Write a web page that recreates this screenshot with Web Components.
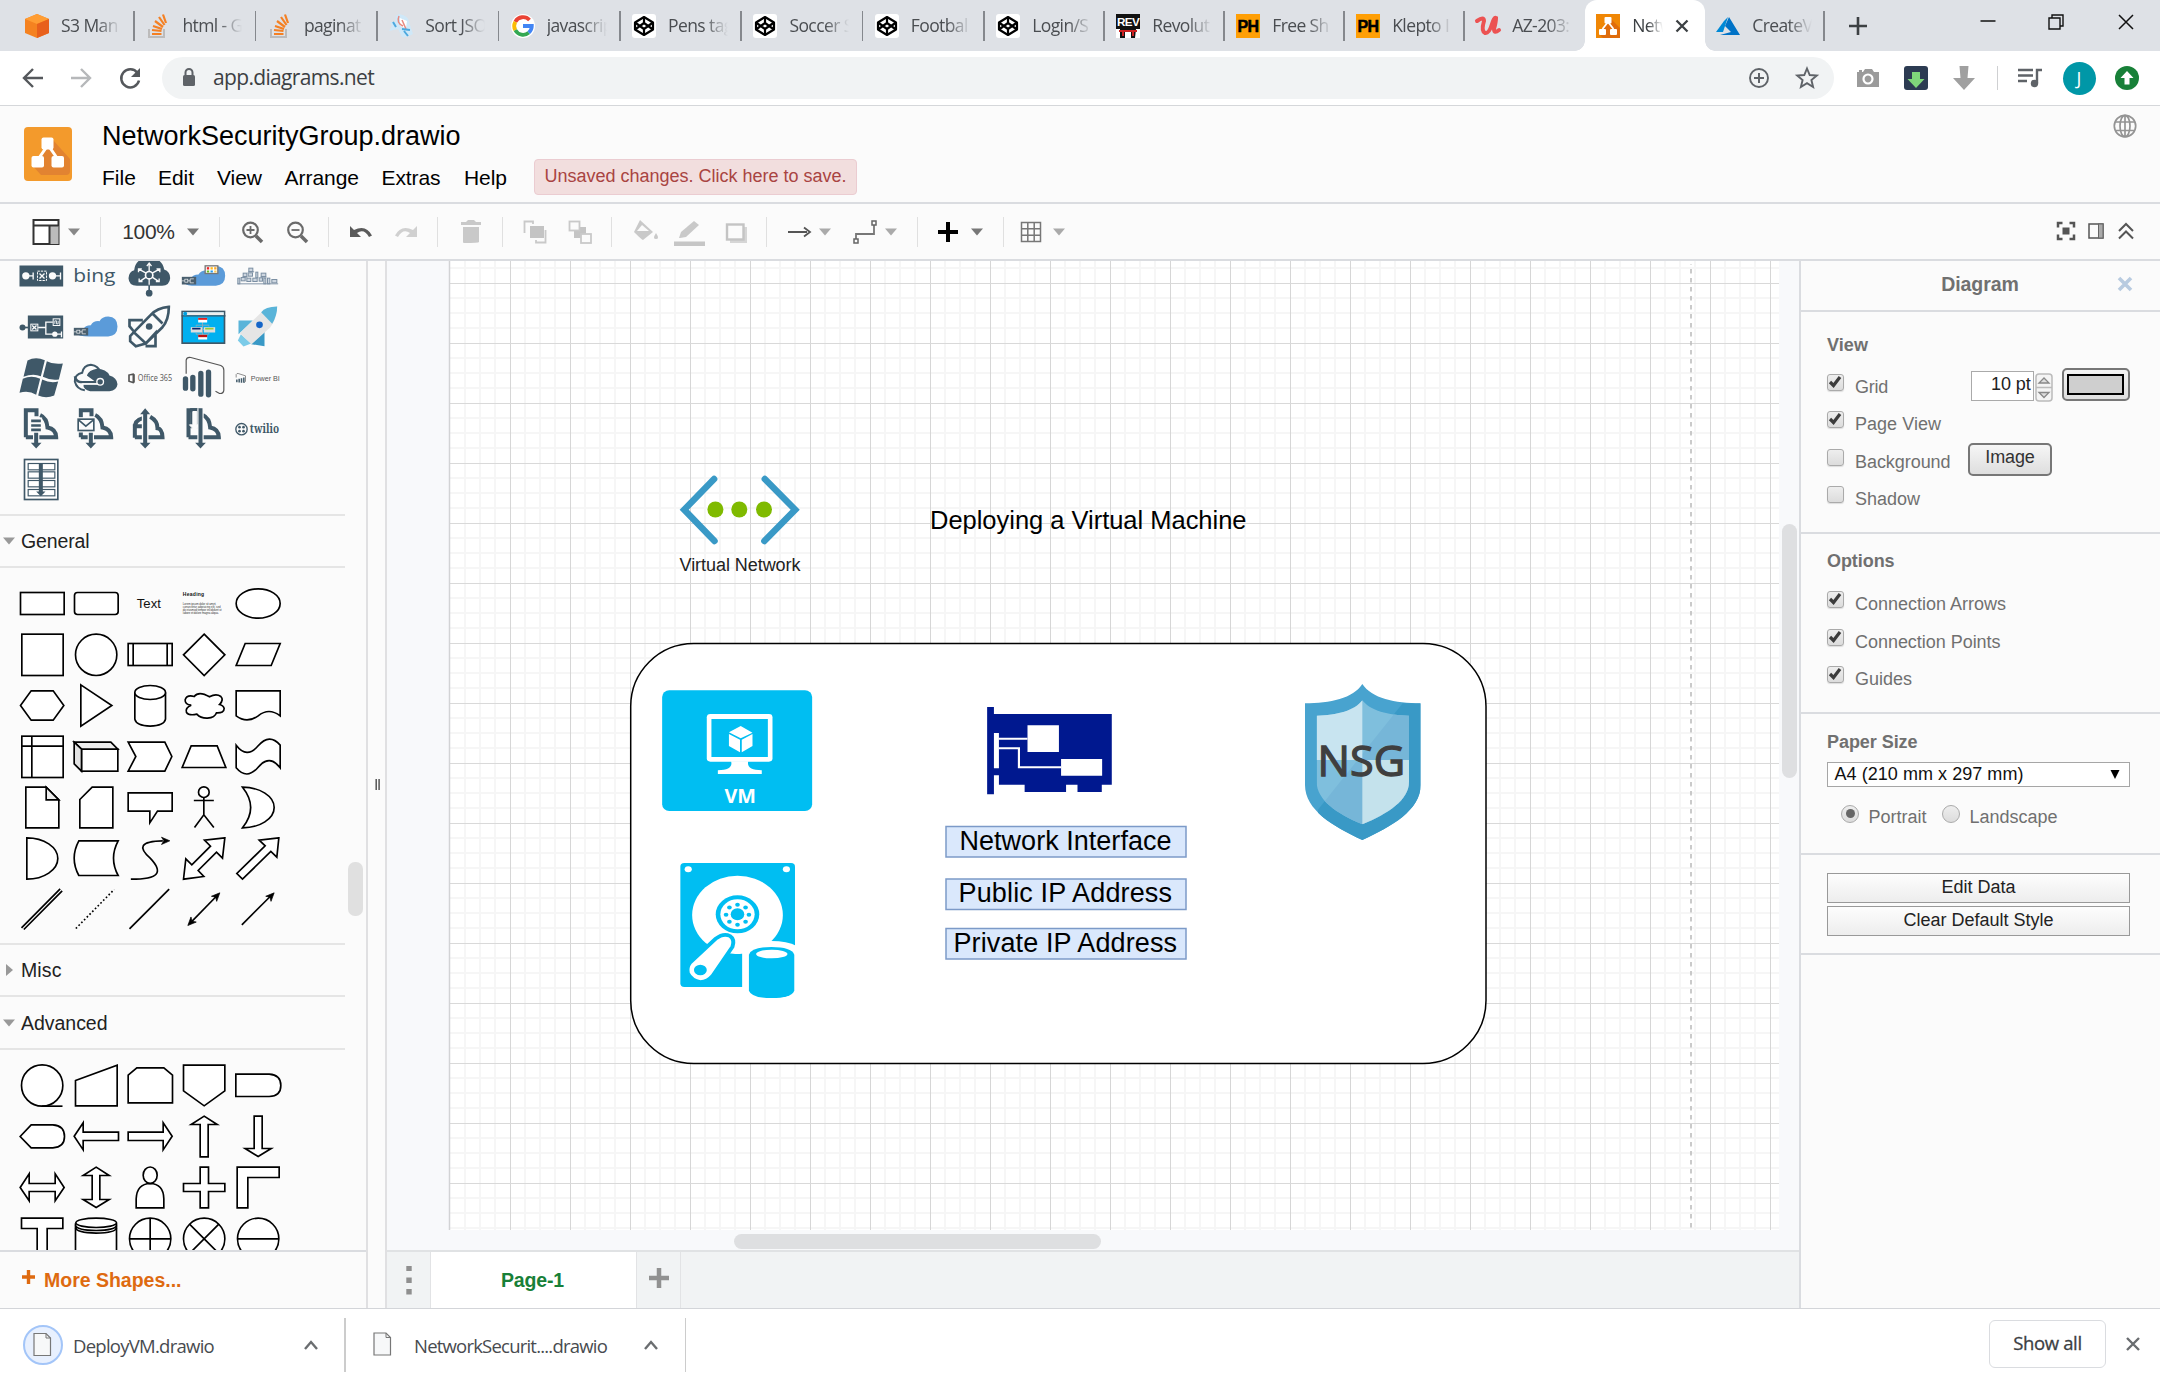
<!DOCTYPE html>
<html lang="en">
<head>
<meta charset="utf-8">
<title>NetworkSecurityGroup.drawio</title>
<style>
html,body{margin:0;padding:0;width:2160px;height:1380px;overflow:hidden;background:#fff;font-family:"Liberation Sans",Arial,sans-serif}
</style>
</head>
<body>
<app-window></app-window>
<script>
const UI = "'Open Sans','Noto Sans',sans-serif";
const svg = (w, h, body, extra = '') =>
  `<svg width="${w}" height="${h}" viewBox="${-w / 2} ${-h / 2} ${w} ${h}" ${extra}>${body}</svg>`;
/* Lays items out in a flex row; each item is [centre x, width, markup, vertical nudge]. */
function track(start, items) {
  let x = start;
  return items.map(([cx, w, html, dy = 0]) => {
    const left = cx - w / 2, gap = left - x;
    x = left + w;
    return `<span class="i" style="width:${w}px;margin-left:${gap}px;margin-top:${dy * 2}px">${html}</span>`;
  }).join('');
}
const base = `:host{display:block;box-sizing:border-box}*{box-sizing:border-box}svg{display:block;flex:none;overflow:visible}
.i{flex:none;display:flex;align-items:center;justify-content:center}`;
class Base extends HTMLElement {
  connectedCallback() {
    if (this.shadowRoot) return;
    this.attachShadow({ mode: 'open' }).innerHTML = `<style>${base}${this.css()}</style>${this.html()}`;
    this.ready();
  }
  css() { return ''; }
  html() { return '<slot></slot>'; }
  ready() {}
}
/* Text that is tracked to a given width. */
class FitText extends Base {
  css() { return ':host{display:inline-block;white-space:nowrap;line-height:1.2;padding-top:2px}:host([flat]){padding-top:0}span{display:inline-block}'; }
  html() { return '<span><slot></slot></span>'; }
  ready() {
    const s = this.shadowRoot.querySelector('span'), w = +this.getAttribute('w');
    const n = this.textContent.length, d = w - s.getBoundingClientRect().width;
    s.style.letterSpacing = (d / n) + 'px';
  }
}
customElements.define('fit-text', FitText);

/* ---------- browser tabs ---------- */
const codepen = svg(24, 24, `<rect x="-12" y="-12" width="24" height="24" rx="3" fill="#fff"/><g fill="none" stroke="#000" stroke-width="2.200" stroke-linejoin="round"><path d="M0-9L9-3.500V3.500L0 9-9 3.500V-3.500Z"/><path d="M-9-3.500L0 3 9-3.500M-9 3.500L0-3 9 3.500M0-9V-3M0 9V3"/></g>`);
const stack = svg(24, 24, `<path d="M-9 3V11H6V3" fill="none" stroke="#bcbbbb" stroke-width="2"/><g stroke="#f48024" stroke-width="2.200"><path d="M-6 8H3.500M-6 4L3.500 5M-5 0L4 3M-3-5L5 1M1-9L6.500-1M5-11.500L8-3"/></g>`);
const ph = svg(24, 24, `<rect x="-12" y="-12" width="24" height="24" fill="#ff9f05"/><text x="0" y="6" font-family="Liberation Sans" font-weight="700" font-size="16" text-anchor="middle" textLength="21" lengthAdjust="spacingAndGlyphs" stroke="#000" stroke-width=".5">PH</text>`);
const FAV = {
  s3: svg(24, 24, `<path d="M0-12L12-7V7L0 12-12 7V-7Z" fill="#f58220"/><path d="M0-12L12-7 0-2-12-7Z" fill="#ff9d33"/><path d="M0-2L12-7V7L0 12Z" fill="#e8601c"/>`),
  stack, codepen, ph,
  sort: svg(24, 24, `<path d="M-2-12Q8-10 8-4L12 8Q6 12 1 11L-3 3-12 5-9 0-11-4-6-4-5-10Z" fill="#cfe8f8"/><path d="M-1-8L6-5 5 2-1 0Z" fill="#fff"/><path d="M-2-10Q-5-3 2 0M1-6L5 3" stroke="#e88a80" fill="none" stroke-width="1.500"/><path d="M-8-4L-5 1M3 5L7 10M1 3L9 4" stroke="#4da9df" stroke-width="2"/>`),
  google: svg(24, 24, `<circle r="12" fill="#fff"/><g fill="none" stroke-width="3.800"><path d="M6.500-6A8.800 8.800 0 0 0-7.700-4.200" stroke="#ea4335"/><path d="M-7.700-4.200A8.800 8.800 0 0 0-7.700 4.200" stroke="#fbbc05"/><path d="M-7.700 4.200A8.800 8.800 0 0 0 5.800 6.600" stroke="#34a853"/><path d="M5.800 6.600A8.800 8.800 0 0 0 8.800 0H0" stroke="#4285f4"/></g>`),
  rev: svg(24, 24, `<rect x="-12" y="-12" width="24" height="24" fill="#fff"/><path d="M-12-12H12V3H8L7 12H3V5H-3V12H-8V3H-12Z" fill="#111"/><path d="M-9 4H9V6H6V10H4V6H-4V10H-6V6H-9Z" fill="#c22"/><text y="0" font-family="Liberation Sans" font-weight="700" font-size="10.500" fill="#fff" text-anchor="middle" textLength="22" lengthAdjust="spacingAndGlyphs">REV</text>`),
  udemy: svg(24, 24, `<path d="M-11-5Q-4-10-4-5 -7 5-3 7 1 8 4-2 6-9 8-8 8-4 6 3 6 8 11 4" fill="none" stroke="#ec5252" stroke-width="4" stroke-linecap="round"/>`),
  drawio: svg(24, 24, `<rect x="-12" y="-12" width="24" height="24" fill="#f08705"/><path d="M3-7L12 2V12H-5L-9 8Z" fill="#df6c0c"/><g fill="#fff"><rect x="-3.500" y="-9" width="7" height="6.500" rx="1"/><rect x="-9" y="3" width="7" height="6" rx="1"/><rect x="2" y="3" width="7" height="6" rx="1"/></g><path d="M-5.500 3L0-4 5.500 3" fill="none" stroke="#fff" stroke-width="1.800"/>`),
  azure: svg(24, 24, `<path d="M0-9L-5 6H-12L-4-5Z" fill="#0089d6"/><path d="M1-9L12 9H-8L3 6-3 0Z" fill="#0072c6"/>`)
};
class BrowserTab extends Base {
  css() {
    const a = this.hasAttribute('active');
    return `:host{flex:none;width:${this.getAttribute('width')}px;height:51px;position:relative;display:flex;align-items:center;padding-left:11.500px;gap:12px;font:17.500px/26px ${UI};letter-spacing:-.6px;color:#4a4d51;${a ? 'background:#fff;border-radius:12px 12px 0 0;color:#3c4043' : ''}}
.t{flex:none;width:${a ? 31 : 60}px;overflow:hidden;white-space:nowrap;-webkit-mask-image:linear-gradient(90deg,#000 ${a ? 50 : 60}%,transparent);height:26px;margin-top:-1px}
.s{position:absolute;right:0;top:11px;width:1.500px;height:30px;background:#85888d}
.f{position:absolute;bottom:0;width:10px;height:10px}`;
  }
  html() {
    const a = this.hasAttribute('active');
    return `${FAV[this.getAttribute('icon')]}<span class="t"><slot></slot></span>
${a ? svg(14, 14, '<path d="M-5.500-5.500L5.500 5.500M5.500-5.500L-5.500 5.500" stroke="#3c4043" stroke-width="2.300"/>') +
      `<i class="f" style="left:-10px;background:radial-gradient(circle at 0 0,transparent 9.500px,#fff 10px)"></i><i class="f" style="right:-10px;background:radial-gradient(circle at 100% 0,transparent 9.500px,#fff 10px)"></i>` : ''}
${this.hasAttribute('sep') ? '<i class="s"></i>' : ''}`;
  }
}
customElements.define('browser-tab', BrowserTab);

class TabStrip extends Base {
  css() { return `:host{height:51px;background:#dee1e6;display:flex;align-items:center;padding-left:13.600px}`; }
  html() {
    const t = [['s3', 'S3 Man'], ['stack', 'html - G'], ['stack', 'paginat'], ['sort', 'Sort JSO'], ['google', 'javascrip'], ['codepen', 'Pens tag'], ['codepen', 'Soccer S'], ['codepen', 'Footbal'], ['codepen', 'Login/S'], ['rev', 'Revolut'], ['ph', 'Free Sh'], ['ph', 'Klepto I'], ['udemy', 'AZ-203:'], ['drawio', 'Netw'], ['azure', 'CreateV']];
    return t.map(([i, s], k) => `<browser-tab icon="${i}" width="${k < 8 ? 121.4 : 120}" ${k == 13 ? 'active' : ''} ${k == 12 || k == 13 ? '' : 'sep'}>${s}</browser-tab>`).join('') +
      track(1824.800, [
        [1858, 20, svg(20, 20, '<path d="M-9 0H9M0-9V9" stroke="#3c4043" stroke-width="2.600"/>')],
        [1988.500, 16, svg(16, 16, '<path d="M-7.500 0H7.500" stroke="#111" stroke-width="1.500"/>'), -4.500],
        [2056.500, 16, svg(16, 16, '<path d="M-7-4H4V7H-7ZM-4-4V-7H7V4H4" fill="none" stroke="#111" stroke-width="1.400"/>'), -4],
        [2126.500, 16, svg(16, 16, '<path d="M-7-7L7 7M7-7L-7 7" stroke="#111" stroke-width="1.500"/>'), -4]]);
  }
}
customElements.define('tab-strip', TabStrip);

class AddressBar extends Base {
  css() {
    return `:host{height:55px;background:#fff;border-bottom:1px solid #d5d7da;display:flex;align-items:center}
.o{flex:none;margin-left:20.500px;width:1672px;height:42px;border-radius:21px;background:#f1f3f4;display:flex;align-items:center;font:21px ${UI};color:#3c4043}
.tx{flex:none;margin-left:17px;width:161px;margin-top:-2px}
.av{width:33px;height:33px;border-radius:50%;background:#0097a7;color:#fff;font:18px/32px ${UI};text-align:center}`;
  }
  html() {
    return track(0, [
      [33, 22, svg(22, 22, '<path d="M10 0H-9M0-9L-9 0 0 9" fill="none" stroke="#55585c" stroke-width="2.400"/>')],
      [81, 22, svg(22, 22, '<path d="M-10 0H9M0-9L9 0 0 9" fill="none" stroke="#b6b8ba" stroke-width="2.400"/>')],
      [129.500, 24, svg(24, 24, '<path d="M7.500-5A9 9 0 1 0 9 2.500" fill="none" stroke="#55585c" stroke-width="2.500"/><path d="M10-10V-1H1Z" fill="#55585c"/>')]]) +
      `<div class="o">${track(162, [[189, 14, svg(14, 20, '<rect x="-6" y="-3" width="12" height="11" rx="1.500" fill="#5f6368"/><path d="M-3.500-3V-5.500a3.500 3.500 0 0 1 7 0V-3" fill="none" stroke="#5f6368" stroke-width="2"/>')]])}
<span class="tx"><fit-text w="161">app.diagrams.net</fit-text></span>${track(374, [
        [1759, 22, svg(22, 22, '<circle r="9" fill="none" stroke="#5f6368" stroke-width="1.900"/><path d="M-5 0H5M0-5V5" stroke="#5f6368" stroke-width="2"/>')],
        [1807, 22, svg(22, 22, '<path d="M0-9.500L2.700-3 9.800-2.500 4.400 2 6.100 9 0 5.200-6.100 9-4.400 2-9.800-2.500-2.700-3Z" fill="none" stroke="#5f6368" stroke-width="1.900"/>')]])}</div>` +
      track(1834, [
        [1868, 24, svg(24, 24, '<path d="M-11-6H-5L-3-9H4L6-6H11V9H-11Z" fill="#9b9b9b"/><path d="M-9-7H-6" stroke="#9b9b9b" stroke-width="2"/><circle r="4.500" cy="1" fill="none" stroke="#fff" stroke-width="2.200"/>')],
        [1916, 24, svg(24, 24, '<rect x="-12" y="-12" width="24" height="24" rx="3" fill="#2c3b52"/><path d="M-4-6H4V1H8.500L0 10-8.500 1H-4Z" fill="#7fd77a"/>')],
        [1964, 24, svg(24, 24, '<path d="M-4.500-12H4.500L3.500 0H11L0 12-11 0H-3.500Z" fill="#a0a0a0"/>')],
        [1997.500, 1, '<i style="width:1px;height:24px;background:#cfd0d2"></i>'],
        [2030, 26, svg(26, 24, '<path d="M-12-8H3M-12-2.500H3M-12 3H-3M12-8H7V5" fill="none" stroke="#5f6368" stroke-width="2.400"/><circle cx="4.500" cy="5.500" r="3.700" fill="#5f6368"/>')],
        [2079, 34, '<span class="av">J</span>'],
        [2127, 24, svg(24, 24, '<circle r="12" fill="#188038"/><path d="M0-7L6.500 0H2.500V6.500H-2.500V0H-6.500Z" fill="#fff"/>')]]);
  }
}
customElements.define('address-bar', AddressBar);

/* ---------- application header ---------- */
class AppHeader extends Base {
  css() {
    return `:host{height:98px;background:#fbfbfb;border-bottom:2px solid #dadce0;display:flex;padding:0 0 0 24px;color:#000}
.logo{margin-top:21px;flex:none}
.c{margin-left:30px;display:flex;flex-direction:column;flex:1}
.t{font-size:27px;height:32px;margin-top:12px;line-height:32px}
.m{display:flex;align-items:center;height:36px;margin-top:9px;font-size:21px}
.m .k{flex:none}
.u{display:flex;align-items:center;height:36px;width:323px;margin-top:0;padding:0 0 3px 9.500px;border:1.500px solid #ebccd1;border-radius:4px;background:#f2dede;color:#a94442;font-size:18px}
.g{margin:8px 23px 0 0}`;
  }
  html() {
    const menu = [['File', 102, 34], ['Edit', 158, 36], ['View', 217, 45], ['Arrange', 284.500, 74.500], ['Extras', 381.500, 59], ['Help', 464, 43]];
    let x = 102;
    return `<svg class="logo" width="48" height="54" viewBox="0 0 48 54"><rect width="48" height="54" rx="4" fill="#f39a2c"/><path d="M29 13L46 32V44a4 4 0 0 1-4 4H17L8 38Z" fill="#e28331"/><path d="M15 31L24 18 33 31" fill="none" stroke="#fff" stroke-width="3"/><rect x="17.500" y="10.500" width="12" height="12" rx="2" fill="#fff"/><rect x="7.500" y="29" width="12.500" height="11.500" rx="2" fill="#fff"/><rect x="27.500" y="29" width="12.500" height="11.500" rx="2" fill="#fff"/></svg>
<div class="c"><div class="t"><fit-text w="358.500">NetworkSecurityGroup.drawio</fit-text></div>
<div class="m">${menu.map(([s, l, w]) => { const g = l - x; x = l + w; return `<span class="k" style="margin-left:${g}px;width:${w}px"><fit-text w="${w}">${s}</fit-text></span>`; }).join('')}
<span class="u" style="margin-left:${534 - x}px"><fit-text w="302">Unsaved changes. Click here to save.</fit-text></span></div></div>
<span class="g">${svg(24, 24, '<g fill="none" stroke="#949494" stroke-width="1.700"><circle r="10.700"/><ellipse rx="5" ry="10.700"/><path d="M0-10.700V10.700M-10 -4H10M-10 4.500H10"/></g>')}</span>`;
  }
}
customElements.define('app-header', AppHeader);

const caret = (c = '#888') => svg(12, 8, `<path d="M-6-3.500H6L0 3.500Z" fill="${c}"/>`);
class ToolBar extends Base {
  css() { return `:host{height:57px;background:#fbfbfb;border-bottom:2px solid #dadce0;display:flex;align-items:center;font-size:21px;color:#333}.v{width:1px;height:30px;background:#e0e0e0}`; }
  html() {
    const S = (x) => [x, 1, '<i class="v"></i>'];
    const mag = (p) => svg(24, 24, `<circle cx="-1.500" cy="-2" r="7.300" fill="none" stroke="#6a6a6a" stroke-width="2.200"/><path d="M4 4L10 10" stroke="#6a6a6a" stroke-width="3.600"/><path d="${p}" stroke="#6a6a6a" stroke-width="1.800"/>`);
    return track(0, [
      [45.500, 28, svg(28, 26, '<rect x="-12.500" y="-12" width="25" height="24" fill="#fff" stroke="#333" stroke-width="2"/><rect x="3.500" y="-6" width="9" height="18" fill="#bbb"/><path d="M-12.500-6.500H12.500M3.500-6.500V12" stroke="#333" stroke-width="2" fill="none"/>')],
      [73.500, 12, caret()], S(100.500),
      [148.500, 54, '<fit-text flat w="52.500">100%</fit-text>'], [192.500, 12, caret('#777')], S(219),
      [251.500, 24, mag('M-5.500-2H2.500M-1.500-6V2')], [297, 24, mag('M-5.500-2H2.500')], S(328.500),
      [360.500, 24, svg(24, 24, '<path d="M-11-6V5H0L-4 1Q3-4 8 5L11 3.500Q5-8-7-2Z" fill="#5a5a5a"/>')],
      [406, 24, svg(24, 24, '<path d="M11-6V5H0L4 1Q-3-4-8 5L-11 3.500Q-5-8 7-2Z" fill="#d0d0d0"/>')], S(437.500),
      [471, 22, svg(22, 24, '<path d="M-10-10H-5L-3-12H3L5-10H10V-7H-10ZM-8-5H8V10Q8 11-7 11-8 11-8 10Z" fill="#c9c9c9"/>')], S(502),
      [535, 24, svg(24, 24, '<rect x="-5" y="-6" width="14" height="12" fill="#c4c4c4"/><path d="M-10.500 1V-10.500H-2V-8M10.500-2V10.500H1V8" fill="none" stroke="#c9c9c9" stroke-width="1.800"/>')],
      [580, 24, svg(24, 24, '<rect x="-6" y="-5" width="12" height="11" fill="#c4c4c4"/><rect x="-10.500" y="-10.500" width="10" height="9" fill="#fbfbfb" stroke="#c9c9c9" stroke-width="1.800"/><rect x="1" y="2" width="10" height="9" fill="#fbfbfb" stroke="#c9c9c9" stroke-width="1.800"/>')], S(611.500),
      [644.500, 26, svg(26, 24, '<path d="M-5-11L8 1-2 9Q-3 9-11 1Z" fill="#c9c9c9"/><path d="M-3-6L-8 0H4Z" fill="#fbfbfb"/><path d="M11 2Q15 8 11 8 7 8 11 2" fill="#c9c9c9"/>'), -1],
      [689, 32, svg(32, 28, '<rect x="-15" y="9.500" width="31" height="4.500" fill="#c6c6c6"/><path d="M-9 6L-10 6-8 0 5-11 10-7-3 5Z" fill="#c9c9c9"/>')],
      [735.500, 22, svg(22, 22, '<rect x="-6" y="-5" width="17" height="16" fill="#d6d6d6"/><rect x="-9" y="-7.500" width="16.500" height="15" fill="#fbfbfb" stroke="#c4c4c4" stroke-width="2.400"/>')], S(766),
      [798.500, 24, svg(24, 16, '<path d="M-11 0H8M5-4.500L11 0 5 4.500" fill="none" stroke="#555" stroke-width="1.800"/>')], [825, 11, caret('#aaa')],
      [864.500, 26, svg(26, 24, '<path d="M-9 8V2H9V-8" fill="none" stroke="#777" stroke-width="1.800"/><rect x="-11" y="7" width="4" height="4" fill="#fbfbfb" stroke="#666" stroke-width="1.500"/><rect x="7" y="-11" width="4" height="4" fill="#fbfbfb" stroke="#666" stroke-width="1.500"/>')], [891, 11, caret('#aaa')], S(917.500),
      [948, 22, svg(22, 22, '<path d="M-10 0H10M0-10V10" stroke="#000" stroke-width="4"/>')], [976.500, 11, caret('#777')], S(1003),
      [1031, 22, svg(22, 22, '<path d="M-9.500-9.500H9.500V9.500H-9.500ZM-3.200-9.500V9.500M3.200-9.500V9.500M-9.500-3.200H9.500M-9.500 3.200H9.500" fill="none" stroke="#777" stroke-width="1.500"/>')], [1059, 11, caret('#aaa')],
      [2065.500, 20, svg(20, 20, '<path d="M-8-3.500V-8H-3.500M3.500-8H8V-3.500M8 3.500V8H3.500M-3.500 8H-8V3.500" fill="none" stroke="#555" stroke-width="2.500"/><rect x="-3.500" y="-3.500" width="7" height="7" fill="#555"/>'), -1],
      [2096, 18, svg(18, 18, '<rect x="-7" y="-7" width="14" height="14" fill="none" stroke="#555" stroke-width="1.500"/><rect x="2.500" y="-7" width="4.500" height="14" fill="#aaa" stroke="#666" stroke-width="1"/>'), -1],
      [2125.500, 18, svg(18, 18, '<path d="M-7 0L0-7 7 0M-7 7.500L0 .5 7 7.500" fill="none" stroke="#555" stroke-width="2"/>'), -1]]);
  }
}
customElements.define('tool-bar', ToolBar);

/* ---------- shape palettes: cells are drawn on a 162 x 153 unit lattice ---------- */
const P = (pts, x = '') => `<polygon points="${pts}" ${x}/>`;
const D = (d, x = '') => `<path d="${d}" ${x}/>`;
const R = (x, y, w, h, e = '') => `<rect x="${x}" y="${y}" width="${w}" height="${h}" ${e}/>`;
const C = (x, y, r, e = '') => `<circle cx="${x}" cy="${y}" r="${r}" ${e}/>`;
const head = (x, y, a) => `<path transform="translate(${x} ${y}) rotate(${a})" d="M0 0L-25-11-18 0-25 11Z" fill="#000" stroke-width="2"/>`;
const NF = 'fill="none"';
const tiny = ['Lorem ipsum dolor sit amet,', 'consectetur adipisicing elit, sed', 'do eiusmod tempor incididunt ut', 'labore et dolore magna aliqua.'];
const A = '#3f5868', W = '#fbfbfb';
const fa = `fill="${A}" stroke="none"`, fw = `fill="${W}" stroke="none"`, sa = `fill="none" stroke="${A}"`, sw = `fill="none" stroke="${W}"`;
const blue = (x, y, k) => `<path transform="translate(${x} ${y}) scale(${k})" d="M12 60Q-20 60-22 52-16 38-4 38 0 26 18 26 26 12 44 14 52 0 70 0 98 2 98 30 98 58 70 60Z" fill="#5b9bd9" stroke="none"/>`;
const chip = (x, y) => R(x, y, 43, 23, `fill="#4a5f6e" stroke="none"`) + R(x + 9, y + 7, 9, 9, sw + ' stroke-width="2"') + D(`M${x} ${y + 12}H${x + 8}M${x + 18} ${y + 12}H${x + 25}M${x + 36} ${y + 6}H${x + 25}V${y + 18}H${x + 36}`, sw + ' stroke-width="2"');
/* Cloud behind a bracket, shared by the queue icons. */
const queue = (x) => D(`M${x + 7} 545V464H${x + 39}V482M${x + 50} 479Q${x + 70} 488 ${x + 72} 516 ${x + 97} 520 ${x + 98} 545H${x + 7}`, sa + ' stroke-width="12"');
const down = (cx, y1) => D(`M${cx} ${y1}V566`, `stroke="${W}" stroke-width="19"`) + D(`M${cx - 6} ${y1}H${cx + 6}V562H${cx + 16}L${cx} 579 ${cx - 16} 562H${cx - 6}Z`, fa);
const AZURE = [
  R(60, 30, 131, 63, fa) + C(79, 61, 11, fw) + C(159, 61, 11, fw) + D('M79 61H101M101 51V72M159 61H183M183 51V72', sw + ' stroke-width="4"') + R(114, 47, 27, 28, sw + ' stroke-width="3" stroke-dasharray="7 3"') + D('M120 54L135 69M135 54L120 69', sw + ' stroke-width="4"'),
  `<text x="221" y="79" font-family="Open Sans" font-weight="400" font-size="54" fill="${A}" stroke="none" textLength="127" lengthAdjust="spacingAndGlyphs">bing</text>`,
  D('M412 91Q388 90 387 68 388 48 404 44 408 8 449 6 488 8 494 42 512 48 512 68 510 90 488 91Z', fa) + C(449, 59, 11, sw + ' stroke-width="5"') + D('M449 48V24M449 70V88M440 53L418 41M458 53L480 41M440 65L422 77M458 65L476 77M442 32L449 23 456 32M417 50V40H427M481 50V40H471M419 69V78H429M479 69V78H469', sw + ' stroke-width="4"') + D('M449 90V108', sa + ' stroke-width="5"') + C(449, 113, 10, fa),
  blue(579, 31, 1) + R(617, 31, 38, 23, 'fill="#fff" stroke="#777" stroke-width="4"') + R(622, 35, 7, 7, 'fill="#e22" stroke="none"') + R(633, 35, 7, 7, 'fill="#fb2" stroke="none"') + R(644, 35, 7, 7, 'fill="#fa2" stroke="none"') + R(622, 45, 7, 6, 'fill="#6b2" stroke="none"') + R(633, 45, 7, 6, 'fill="#29e" stroke="none"') + R(644, 45, 7, 6, 'fill="#fc5" stroke="none"') + chip(547, 64),
  [[748, 38, 12], [731, 53, 11], [746, 52, 13], [769, 50, 6], [785, 53, 14], [715, 68, 6], [725, 66, 12], [742, 68, 12], [760, 68, 13], [779, 67, 10], [793, 68, 6], [804, 68, 7], [817, 72, 15]].map(([x, y, w]) => R(x, y, w, w < 8 ? 17 : 10, 'fill="#cdd6e0" stroke="#7b8fa3" stroke-width="3"')).join('') + D('M714 85H836M746 49H764M728 65H744M783 65H801', 'stroke="#8294a8" stroke-width="3"'),
  R(85, 180, 106, 69, fa) + C(69, 216, 9, fa) + D('M69 216H90', sa + ' stroke-width="5"') + R(94, 206, 21, 20, sw + ' stroke-width="3"') + D('M98 210L111 222M111 210L98 222', sw + ' stroke-width="4"') + D('M116 216H139M160 200H139V236H160M166 236H186M186 228V245', sw + ' stroke-width="4"') + R(161, 190, 20, 20, sw + ' stroke-width="3"') + D('M166 205V196H171V205H176V196', sw + ' stroke-width="2.500"') + C(166, 236, 8, fw),
  blue(256, 183, 1) + chip(223, 217),
  D('M508 154Q472 157 453 179L403 230 439 264 488 216Q508 195 508 154ZM459 174L489 204M403 230L392 242V257L409 272 439 264M403 228L390 212V194H430M439 264L468 232V272H438', `fill="${W}" stroke="${A}" stroke-width="8"`) + C(449, 213, 10, fa),
  R(548, 168, 127, 95, `fill="#00b0f0" stroke="${A}" stroke-width="5"`) + R(550, 170, 123, 9, 'fill="#eee" stroke="none"') + D('M546 181H678', `stroke="${A}" stroke-width="4"`) + C(557, 175, 6, 'fill="#00a0e0" stroke="none"') + D('M609 200V245M573 222H646M590 213V209H628V213M590 232V236H628V232', NF + ' stroke="#8ab" stroke-width="3"') + R(596, 187, 27, 14, 'fill="#fff" stroke="none"') + R(596, 187, 27, 6, 'fill="#d22" stroke="none"') + R(574, 215, 34, 16, 'fill="#ddd" stroke="none"') + R(578, 217, 25, 5, 'fill="#126" stroke="none"') + R(613, 215, 34, 16, 'fill="#ddd" stroke="none"') + R(617, 217, 25, 5, 'fill="#9c3" stroke="none"') + R(596, 238, 27, 14, 'fill="#fff" stroke="none"') + R(596, 238, 27, 7, 'fill="#b11" stroke="none"'),
  P('717,195 760,195 717,236', 'fill="#59b4d9" stroke="none"') + P('795,228 795,272 755,266', 'fill="#3999c6" stroke="none"') + P('724,236 715,255 732,273 755,264', 'fill="#7bcbe8" stroke="none"') + D('M833 153Q797 154 778 178L721 233 756 266 812 216Q832 190 833 153Z', 'fill="#e5e5e5" stroke="none"') + D('M833 153Q797 154 785 170L818 205Q833 180 833 153Z', 'fill="#59b4d9" stroke="none"') + C(780, 208, 10, 'fill="#1565c8" stroke="none"'),
  D('M84 315Q108 302 136 314L124 362Q100 352 72 364ZM142 317Q162 328 190 324L178 372Q154 376 130 364ZM70 370Q96 358 122 370L110 418Q88 404 60 412ZM128 372Q152 384 176 378L164 420Q140 430 116 420Z', fa),
  D('M256 404Q232 402 226 378 226 356 248 352 252 330 274 328 298 332 302 350', sa + ' stroke-width="6"') + D('M272 406Q250 402 252 388M262 360Q268 344 292 340 320 340 330 360 352 366 354 386 352 404 330 407H272Q252 404 252 388H300', fa) + D('M226 362Q230 382 252 380H300', sa + ' stroke-width="7"') + D('M246 385H298', sw + ' stroke-width="4"') + D('M240 379H296', sa + ' stroke-width="5"') + C(302, 379, 10, `fill="${A}" stroke="${W}" stroke-width="4"`),
  D('M386 357L402 353 406 357V380L402 384 386 379ZM391 360V376L399 378V359Z', `fill="#555" fill-rule="evenodd" stroke="none"`) + '<text x="415" y="377" font-family="Open Sans" font-weight="400" font-size="26" fill="#555" stroke="none" textLength="103" lengthAdjust="spacingAndGlyphs">Office 365</text>',
  D('M560 355V314Q562 304 574 306L664 330Q673 334 673 344V404Q672 415 660 414L648 407', NF + ' stroke="#555" stroke-width="3.500"') + D('M558 370V398M580 366V400M604 354V416M627 350V418', `stroke="${A}" stroke-width="16" stroke-linecap="round"`),
  D('M710 366V357Q712 353 716 354L738 361V378L734 381', NF + ' stroke="#777" stroke-width="2.500"') + D('M712 372V380M719 370V381M726 368V382M733 366V382', `stroke="${A}" stroke-width="4.500"`) + '<text x="754" y="377" font-family="Liberation Sans" font-size="24" fill="#555" stroke="none" textLength="87" lengthAdjust="spacingAndGlyphs">Power BI</text>',
  queue(72) + R(90, 486, 38, 44, fw) + D('M95 496H124M95 510H124M95 523H124', sa + ' stroke-width="8"') + down(110, 532),
  queue(237) + R(230, 485, 58, 46, fw) + R(236, 491, 47, 34, sa + ' stroke-width="5"') + D('M237 493L259 512 282 493', sa + ' stroke-width="5"') + down(274, 532),
  D('M406 547V520Q404 494 430 488M452 484Q474 496 474 518 488 520 489 545H406M400 512H436', sa + ' stroke-width="12"') + D('M437 470V565', `stroke="${W}" stroke-width="20"`) + D('M437 458L452 476H443V562H453L437 579 421 562H431V476H422Z', fa),
  queue(560) + R(572, 458, 26, 60, fa) + D('M580 468H592V508H602L586 526 570 508H580Z', `fill="${W}" stroke="${W}" stroke-width="3"`) + down(603, 458),
  C(726, 521, 17, `${NF} stroke="${A}" stroke-width="4"`) + [[720, 515], [732, 515], [720, 527], [732, 527]].map(p => C(p[0], p[1], 4, fa)).join('') + `<text x="751" y="533" font-family="Noto Serif,Liberation Serif" font-weight="700" font-size="38" fill="${A}" stroke="none" textLength="88" lengthAdjust="spacingAndGlyphs">twilio</text>`,
  R(75, 612, 100, 120, `fill="#fff" stroke="${A}" stroke-width="5"`) + [624, 649, 675, 702].map(y => R(86, y, 80, 19, `fill="#fff" stroke="${A}" stroke-width="3.500"`)).join('') + D('M118 624H130V708H138L124 722 110 708H118Z', fa)
];
const GENERAL = [
  R(63, 66, 131, 66), R(225, 66, 131, 66, 'rx="9"'),
  '<text x="412" y="111" font-family="Liberation Sans" font-size="39" fill="#111" stroke="none" textLength="72" lengthAdjust="spacingAndGlyphs">Text</text>',
  '<text x="550" y="77" font-family="Liberation Sans" font-weight="700" font-size="15" fill="#111" stroke="none" textLength="64">Heading</text>' + tiny.map((t, i) => `<text x="550" y="${102 + 9 * i}" font-family="Liberation Sans" font-size="8.500" fill="#333" stroke="none" textLength="${[100, 113, 116, 108][i]}">${t}</text>`).join(''),
  '<ellipse cx="776" cy="99" rx="66" ry="44"/>',
  R(67, 191, 124, 124), C(290, 253, 62), R(386, 219, 132, 66) + D('M401 219V285M503 219V285'), P('614,191 676,253 614,315 552,253'), P('737,219 842,219 815,285 710,285'),
  P('63,405 95,361 161,361 193,405 161,449 95,449'), P('244,343 337,405 244,467'),
  D('M406 366V446Q410 466 452 467 494 466 498 446V366') + '<ellipse cx="452" cy="366" rx="46" ry="21"/>',
  D('M584 378Q562 372 557 388 556 402 575 404 556 412 561 426 568 436 592 431 604 444 624 443 646 442 651 427 674 428 674 414 672 405 660 402 674 388 664 378 650 368 630 379 598 360 584 378Z'),
  D('M710 361H842V436Q808 410 776 436 742 460 710 436Z'),
  R(67, 497, 124, 124) + D('M67 527H191M97 497V621'),
  R(246, 536, 109, 66) + P('224,515 334,515 355,536 246,536', 'fill="#eee"') + P('224,515 246,536 246,602 224,580', 'fill="#e2e2e2"'),
  P('386,515 496,515 517,558 496,602 386,602 409,558'), P('575,526 653,526 679,591 548,591'),
  D('M710 524Q742 566 776 526 810 487 842 524V592Q810 550 776 590 742 630 710 592Z'),
  D('M79 650H140L178 688V772H79Z') + D('M140 650V688H178Z', 'fill="#eee"'), P('278,650 340,650 340,772 241,772 241,687'),
  P('386,667 518,667 518,722 474,722 451,757 451,722 386,722'), C(613, 665, 16) + D('M613 682V733M583 690H643M585 771L613 733 643 771', NF), D('M729 650A95 61 0 0 1 729 772Q778 711 729 650Z'),
  D('M82 802A93 62 0 0 1 82 926Z'), D('M238 811H356Q328 863 356 915H238Q210 863 238 811Z'),
  D('M394 926C480 926 492 905 452 863 415 830 422 812 490 811', NF) + head(511, 811, 0),
  P('676,802 615,809 633,827 577,883 559,865 552,926 613,918 596,900 651,845 669,863'), P('838,802 779,809 797,826 712,909 729,926 814,843 832,860'),
  D('M66 1072L182 955M73 1077L188 961'), D('M229 1074L344 957', 'stroke-dasharray="5 6.700"'), D('M390 1075L509 956'),
  D('M575 1055L650 978') + head(565, 1065, 134) + head(661, 967, -46), D('M727 1063L812 978') + head(824, 967, -46)
];
const circ = (x, d) => C(x, 925, 62) + D(d);
const ADVANCED = [
  C(128, 465, 62) + D('M127 527H189'), P('228,450 353,404 353,526 228,526'), P('412,412 493,412 519,434 519,517 386,517 386,434'), P('552,404 676,404 676,481 614,526 552,481'), D('M709 431H809Q844 433 844 465 844 497 809 498H709Z'),
  D('M62 618L95 583H160Q195 585 195 618 195 650 160 652H95Z'), P('224,617 251,577 251,605 357,605 357,630 251,630 251,658'), P('386,605 491,605 491,577 518,617 491,658 491,630 386,630'), P('614,557 653,582 626,582 626,679 602,679 602,582 575,582'), P('764,557 788,557 788,654 815,654 776,678 737,654 764,654'),
  P('62,771 89,730 89,759 167,759 167,730 194,771 167,811 167,783 89,783 89,811'), P('290,710 329,735 301,735 301,807 329,807 290,831 251,807 278,807 278,735 251,735'), D('M410 832V805Q412 760 452 759 492 760 493 805V832Z') + '<ellipse cx="452" cy="734" rx="21" ry="24.500"/>', P('602,710 627,710 627,759 676,759 676,783 627,783 627,832 602,832 602,783 552,783 552,759 602,759'), P('713,710 839,710 839,741 745,741 745,832 713,832'),
  P('66,863 190,863 190,894 143,894 143,985 113,985 113,894 66,894'), D('M228 878V975H351V878') + D('M228 892Q232 907 290 908 348 907 351 892M228 885Q232 899 290 900 348 899 351 885', NF) + '<ellipse cx="290" cy="877" rx="61" ry="14"/>',
  circ(452, 'M452 863V987M390 925H514'), circ(614, 'M570 881L658 969M658 881L570 969'), circ(776, 'M714 925H838')
];
const SETS = { azure: [AZURE, -16.5], general: [GENERAL, 22.5], advanced: [ADVANCED, 388.5] };
class ShapeGrid extends Base {
  css() { return `:host{padding-left:14.800px}.g{display:grid;grid-template-columns:repeat(5,54px);grid-auto-rows:51px}`; }
  html() {
    const [list, top] = SETS[this.getAttribute('set')];
    return `<div class="g">${list.map((s, i) => `<svg width="54" height="51" viewBox="${46.5 + 162 * (i % 5)} ${top + 153 * Math.floor(i / 5)} 162 153" fill="#fff" stroke="#000" stroke-width="5">${s}</svg>`).join('')}</div>`;
  }
}
customElements.define('shape-grid', ShapeGrid);
class SectionTitle extends Base {
  css() { return `:host{width:345px;height:${this.getAttribute('h')}px;border-bottom:2px solid #e5e5e5;display:flex;align-items:center;font-size:19.500px;color:#222}span{width:21px;padding-left:3px;flex:none}`; }
  html() {
    return `<span>${this.hasAttribute('open') ? svg(12, 8, '<path d="M-6-3.500H6L0 3.500Z" fill="#999"/>') : svg(12, 12, '<path d="M-3-6V6L4 0Z" fill="#999"/>')}</span><fit-text w="${this.getAttribute('w')}">${this.getAttribute('label')}</fit-text>`;
  }
}
customElements.define('section-title', SectionTitle);
class ShapeSidebar extends Base {
  css() {
    return `:host{width:368px;flex:none;border-right:2px solid #e0e0e2;background:#fbfbfb;display:flex;flex-direction:column}
.l{height:989px;overflow:hidden;position:relative}
.r{width:345px;height:2px;background:#e5e5e5}
.b{position:absolute;right:3px;top:601px;width:15px;height:54px;border-radius:7px;background:#e0e0e0}
.m{height:58px;border-top:2px solid #dadce0;display:flex;align-items:center;color:#de6a10;font-weight:700;font-size:19.500px;padding-left:22px;gap:9px}`;
  }
  html() {
    return `<div class="l"><shape-grid set="azure" style="margin-top:-11.500px"></shape-grid><div class="r" style="margin-top:9.500px"></div>
<section-title label="General" w="68.500" h="52" open></section-title><shape-grid set="general" style="margin:9.500px 0 8.500px"></shape-grid><div class="r"></div>
<section-title label="Misc" w="40.500" h="52"></section-title><section-title label="Advanced" w="86.500" h="53" open></section-title><shape-grid set="advanced" style="margin-top:9.500px"></shape-grid><i class="b"></i></div>
<div class="m">${svg(13, 14, '<path d="M-6.500 0H6.500M0-7V7" stroke="#de6a10" stroke-width="3.400"/>', 'style="margin-top:-6px"')}<fit-text w="137.500">More Shapes...</fit-text></div>`;
  }
}
customElements.define('shape-sidebar', ShapeSidebar);

/* ---------- drawing area ---------- */
class DiagramCanvas extends Base {
  css() { return `:host{height:989px;background:#f8f9fb;position:relative}i{position:absolute;background:#dedfe1;border-radius:8px}text{font-family:"Liberation Sans",Arial,sans-serif}`; }
  html() {
    let g = '';
    for (let x = 465; x < 1779; x += 15) if (x % 60 != 30) g += `<path d="M${x} 261V1230" stroke="#f6f6f6" stroke-width="2"/>`;
    for (let y = 268.5; y < 1230; y += 15) if ((y - 283.5) % 60) g += `<path d="M450 ${y - .5}H1779" stroke="#f6f6f6" stroke-width="2"/>`;
    for (let x = 510; x < 1779; x += 60) g += `<path d="M${x + .5} 261V1230" stroke="#d6d6d6"/>`;
    for (let y = 283.5; y < 1230; y += 60) g += `<path d="M450 ${y}H1779" stroke="#d9d9d9"/>`;
    const note = (y, x, w, s, b) => `<rect x="946" y="${y}" width="240" height="30.500" fill="#dae8fc" stroke="#7c9ac8" stroke-width="1.500"/><text x="${x}" y="${b}" font-size="27" textLength="${w}">${s}</text>`;
    const c = '#00bef2';
    return `<svg width="1412" height="989" viewBox="387 261 1412 989"><rect x="450" y="261" width="1329" height="969" fill="#fff"/>${g}
<path d="M449.500 261V1230" stroke="#d2d3d5" stroke-width="1.500"/><path d="M1691 264V1230" stroke="#b9b9b9" stroke-width="1.500" stroke-dasharray="4.500 4.500" stroke-dashoffset="4"/>
<path d="M714.100 479L684.200 509.700 714.500 541M764.800 479L795.200 509.700 764.400 541" fill="none" stroke="#3999c6" stroke-width="6.500" stroke-linecap="round"/>
<g fill="#7fba00"><circle cx="715.400" cy="509.500" r="8"/><circle cx="739.300" cy="509.500" r="8"/><circle cx="764" cy="509.500" r="8"/></g>
<text x="679.500" y="571" font-size="18" fill="#222" textLength="121">Virtual Network</text>
<text x="930" y="529" font-size="25.500" textLength="316.500">Deploying a Virtual Machine</text>
<rect x="630.700" y="643.500" width="855.300" height="420" rx="63" fill="#fff" stroke="#000" stroke-width="1.500"/>
<g transform="translate(620 680) scale(.35714 .33333)">
<rect x="118" y="31" width="420" height="362" rx="20" fill="${c}"/><rect x="243" y="102" width="184" height="143" rx="10" fill="#fff"/><rect x="256" y="117" width="158" height="114" fill="${c}"/>
<path d="M311 244Q318 270 274 271V282H397V271Q353 270 359 244ZM338 138L371 158 338 175 305 157ZM305 162L336 179V217L305 198ZM341 179L371 162V198L341 217Z" fill="#fff"/>
<rect x="169" y="549" width="321" height="372" rx="11" fill="${c}"/><g fill="#fff"><ellipse cx="191" cy="568" rx="10" ry="9"/><ellipse cx="466" cy="568" rx="10" ry="9"/><ellipse cx="329" cy="705" rx="127" ry="118"/></g>
<path d="M240 822H342V830H240Z" fill="${c}"/><path d="M342 800V925H495V798Q468 783 424 783H342Z" fill="#fff"/>
<ellipse cx="329" cy="703" rx="61" ry="57" fill="${c}"/><ellipse cx="329" cy="703" rx="48" ry="45" fill="#fff"/><ellipse cx="329" cy="703" rx="19" ry="18" fill="${c}"/>
${[0, 1, 2, 3, 4, 5, 6, 7].map(k => `<ellipse cx="${329 + 32 * Math.cos(k * Math.PI / 4)}" cy="${704 + 30 * Math.sin(k * Math.PI / 4)}" rx="6.500" ry="6" fill="${c}"/>`).join('')}
<path d="M196 848L268 776Q290 758 308 768 322 778 315 800L259 888Q245 906 225 906 200 902 190 880 186 862 196 848Z" fill="#fff" stroke="${c}" stroke-width="11"/>
<ellipse cx="225" cy="870" rx="18" ry="16" fill="${c}"/><path d="M361 824Q368 801 424 801 480 801 488 824V932Q480 954 424 954 368 954 361 932Z" fill="${c}"/><ellipse cx="425" cy="822" rx="44" ry="13" fill="#fff"/>
<path d="M1028 81H1047V102H1377V314H1349V336H1281V314H1249V336H1133V314H1047V343H1028Z" fill="#00188f"/>
<path d="M1047 159H1061V265H1047ZM1047 286H1061V315H1047ZM1141 136H1229V216H1141ZM1235 237H1350V287H1235Z" fill="#fff"/><path d="M1061 176H1141M1061 205H1117V262H1235" fill="none" stroke="#fff" stroke-width="6"/></g>
<text x="724.500" y="803" style="font-family:'Open Sans'" font-weight="700" font-size="19.500" fill="#fff" textLength="31.500" lengthAdjust="spacingAndGlyphs">VM</text>
<g transform="translate(1180 640) scale(.33333)"><defs><clipPath id="o"><path d="M547 132C575 175 645 190 722 190V435C722 510 635 560 547 600 460 560 375 510 375 435V190C450 190 520 175 547 132Z"/></clipPath><clipPath id="n"><path d="M547 181C570 212 625 226 687 227V425C687 480 625 520 547 553 470 520 410 480 410 425V227C470 226 525 212 547 181Z"/></clipPath></defs>
<g clip-path="url(#o)"><rect x="370" y="130" width="360" height="480" fill="#48a3cf"/><path d="M668 190L415 508 400 620H740V190Z" fill="#3999c6"/></g>
<g clip-path="url(#n)"><rect x="400" y="170" width="300" height="400" fill="#7fbfdd"/><path d="M668 190L415 508 400 620H740V190Z" fill="#76b6d8"/><rect x="400" y="170" width="147" height="190" fill="#c8e4f0"/><rect x="547" y="360" width="150" height="200" fill="#c4e2ec"/></g></g>
<text x="1317.500" y="775.500" style="font-family:'Open Sans'" font-size="42.500" font-weight="500" fill="#3f3f3f" stroke="#3f3f3f" stroke-width="1.300" textLength="87.500" lengthAdjust="spacingAndGlyphs">NSG</text>
${note(826.5, 959.5, 212, 'Network Interface', 850)}${note(879, 958.5, 213.5, 'Public IP Address', 902)}${note(928.5, 953.5, 223.5, 'Private IP Address', 952)}
</svg><i style="left:1395px;top:263px;width:15px;height:254px"></i><i style="left:347px;top:973px;width:367px;height:15px"></i>`;
  }
}
customElements.define('diagram-canvas', DiagramCanvas);
class PageTabs extends Base {
  css() {
    return `:host{height:58px;border-top:2px solid #e0e2e4;background:#f1f3f4;display:flex}
div{flex:none;display:flex;align-items:center;justify-content:center;border-right:1.500px solid #e2e3e5}
.p{width:206px;background:#fff;color:#188038;font-weight:700;font-size:19.500px;padding-right:1px}`;
  }
  html() {
    return `<div style="width:43.500px;padding-left:2px">${svg(6, 32, '<path d="M-2.700-15H2.700V-10H-2.700ZM-2.700-3.500H2.700V2H-2.700ZM-2.700 8H2.700V13.500H-2.700Z" fill="#8f8f8f"/>', 'style="margin-top:2px"')}</div><div class="p"><fit-text w="63">Page-1</fit-text></div><div style="width:44px;padding-left:2px">${svg(20, 20, '<path d="M-10 0H10M0-10V10" stroke="#919191" stroke-width="4.500"/>', 'style="margin-top:-4px"')}</div>`;
  }
}
customElements.define('page-tabs', PageTabs);

/* ---------- format panel ---------- */
class CheckRow extends Base {
  css() {
    return `:host{height:37.500px;display:flex;align-items:center;font-size:18px;color:#707070}
.c{flex:none;width:17px;height:17px;margin-bottom:9.500px;border:1.500px solid #aaa;border-radius:3px;background:linear-gradient(#eee,#dcdcdc);box-shadow:0 1px 1px #ddd;margin-right:11px}
.t{width:${this.getAttribute('lw') || 150}px;flex:none}`;
  }
  html() {
    return `<span class="c">${this.hasAttribute('checked') ? '<svg width="14" height="14" viewBox="0 0 14 14"><path d="M2 7L5.500 10.500 12 2" fill="none" stroke="#3c3c3c" stroke-width="3.200"/></svg>' : ''}</span><span class="t"><fit-text w="${this.getAttribute('w')}">${this.getAttribute('label')}</fit-text></span><slot></slot>`;
  }
}
customElements.define('check-row', CheckRow);
class FormatPanel extends Base {
  css() {
    return `:host{width:361px;flex:none;background:#fbfbfb;border-left:2px solid #dadce0;color:#707070;font-size:18px}
.h{height:51px;border-bottom:2px solid #dadce0;display:flex;align-items:center;font-weight:700;font-size:19.500px;padding-bottom:3px}
section{border-bottom:2px solid #dadce0;padding:0 30px 0 26px}
h4{margin:0;font-size:18px;font-weight:700;display:flex;align-items:center}
.in{width:63px;height:30px;border:1.500px solid #aaa;background:#fff;color:#222;display:flex;align-items:center;justify-content:flex-end;padding:0 2px 3px 0;margin:-2px 0 0 0}
.st{margin-left:1px;margin-top:1px}
.sw{margin-left:9px;margin-top:-5px;width:69px;height:33px;border:2px solid #777;border-radius:5px;background:linear-gradient(#f4f4f4,#dedede);display:flex;align-items:center;justify-content:center}
.sw b{width:57px;height:21px;border:2px solid #000;background:#cfcfcf}
.im{width:84px;height:33px;margin-top:-5px;border:2px solid #777;border-radius:5px;background:linear-gradient(#f6f6f6,#dedede);color:#333;display:flex;align-items:center;justify-content:center;padding-bottom:5px}
.sel{height:25px;border:1.500px solid #a6a6a6;background:#fff;color:#111;display:flex;align-items:center;justify-content:space-between;padding:0 9px 0 6.500px}
.ra{display:flex;align-items:center;height:66px;padding:0 0 6px 14px}
.o{flex:none;width:18px;height:18px;border:1.500px solid #aaa;border-radius:50%;background:linear-gradient(#eee,#dcdcdc);display:flex;align-items:center;justify-content:center;margin-top:-7px}
.o b{width:9px;height:9px;border-radius:50%;background:#666}
.bt{height:30px;border:1.500px solid #999;background:linear-gradient(#fdfdfd,#ededed);color:#222;display:flex;align-items:center;justify-content:center;margin-bottom:3px;padding-bottom:3px}`;
  }
  html() {
    return `<div class="h">${track(0, [[179, 90, '<fit-text w="77.500">Diagram</fit-text>'], [324, 16, svg(16, 16, '<path d="M-6-6L6 6M6-6L-6 6" stroke="#b8cbe0" stroke-width="3.600"/>')]])}</div>
<section style="height:222px"><h4 style="height:56px;padding-top:11px"><fit-text flat w="41">View</fit-text></h4>
<check-row checked label="Grid" w="33" lw="116"><span class="in"><fit-text w="39.500">10 pt</fit-text></span><svg class="st" width="18" height="29" viewBox="0 0 18 29"><rect x="1" y="1" width="16" height="27" rx="3" fill="#f4f4f4" stroke="#bbb" stroke-width="1.500"/><path d="M1 14.500H17" stroke="#bbb" stroke-width="1.500"/><path d="M4 10H14L9 5ZM4 19.500H14L9 24.500Z" fill="#ddd" stroke="#888" stroke-width="1.300"/></svg><span class="sw"><b></b></span></check-row>
<check-row checked label="Page View" w="86"></check-row><check-row label="Background" w="95.500" lw="113"><span class="im"><fit-text w="49.500">Image</fit-text></span></check-row><check-row label="Shadow" w="65"></check-row></section>
<section style="height:180px"><h4 style="height:51.500px;padding-top:5px"><fit-text flat w="67.500">Options</fit-text></h4><check-row checked label="Connection Arrows" w="151"></check-row><check-row checked label="Connection Points" w="145.500"></check-row><check-row checked label="Guides" w="57"></check-row></section>
<section style="height:141px"><h4 style="height:48px;padding-top:8px"><fit-text w="90.500">Paper Size</fit-text></h4><div class="sel"><fit-text flat w="189">A4 (210 mm x 297 mm)</fit-text>${svg(10, 9, '<path d="M-4.500-4.500H4.500L0 4.500Z" fill="#000"/>')}</div>
<div class="ra"><span class="o"><b></b></span><fit-text w="58" style="margin-left:9.500px">Portrait</fit-text><span class="o" style="margin-left:15.500px"></span><fit-text w="88" style="margin-left:9.500px">Landscape</fit-text></div></section>
<section style="height:100px;padding-top:18px"><div class="bt"><fit-text w="74">Edit Data</fit-text></div><div class="bt"><fit-text w="150">Clear Default Style</fit-text></div></section>`;
  }
}
customElements.define('format-panel', FormatPanel);

/* ---------- download shelf ---------- */
class DownloadShelf extends Base {
  css() { return `:host{height:72px;border-top:1px solid #d3d5d9;background:#fff;display:flex;align-items:center;font:18.500px ${UI};color:#484b4f}.v{width:1.500px;height:54px;background:#ccc}.sa{width:117px;height:48px;border:1.500px solid #dadce0;border-radius:6px;display:flex;align-items:center;justify-content:center;color:#3c4043;font-weight:500;padding-bottom:2px;-webkit-text-stroke:.3px #3c4043}`; }
  html() {
    const file = '<path d="M-8-11H4L8.500-6.500V11H-8Z" fill="#f7f8f9" stroke="#777" stroke-width="1.200"/><path d="M4-11V-6.500H8.500" fill="none" stroke="#777"/>';
    const chev = svg(14, 10, '<path d="M-6 4L0-3 6 4" fill="none" stroke="#6a6d70" stroke-width="2.400"/>');
    return track(0, [
      [42.500, 40, svg(40, 40, `<circle r="19" fill="#e8f0fe" stroke="#a3c5f8" stroke-width="2"/><g transform="translate(-1 -.5)">${file}</g>`)],
      [143.500, 141, '<fit-text w="141">DeployVM.drawio</fit-text>', 1], [310.500, 14, chev], [345, 1.5, '<i class="v"></i>'],
      [382, 18, svg(18, 24, file), -.5], [510.500, 193, '<fit-text w="193">NetworkSecurit....drawio</fit-text>', 1], [651, 14, chev], [685.500, 1.5, '<i class="v"></i>'],
      [2047.500, 117, '<span class="sa"><fit-text flat w="68.500">Show all</fit-text></span>', -.5], [2133, 14, svg(14, 14, '<path d="M-6-6L6 6M6-6L-6 6" stroke="#6a6d70" stroke-width="2.400"/>'), -.5]]);
  }
}
customElements.define('download-shelf', DownloadShelf);

class AppWindow extends Base {
  css() {
    return `:host{width:2160px;height:1380px;display:flex;flex-direction:column;overflow:hidden}:host>*{flex:none}
main{display:flex;height:1047px}.sp{width:19px;border-right:2px solid #e0e0e2;background:#fbfbfb;display:flex;align-items:center;justify-content:center;flex:none;padding-left:2px}.c{width:1412px;flex:none}`;
  }
  html() {
    return `<tab-strip></tab-strip><address-bar></address-bar><app-header></app-header><tool-bar></tool-bar>
<main><shape-sidebar></shape-sidebar><div class="sp">${svg(5, 11, '<path d="M-1.300-5.500V5.500M1.600-5.500V5.500" stroke="#555" stroke-width="1.500"/>')}</div><div class="c"><diagram-canvas></diagram-canvas><page-tabs></page-tabs></div><format-panel></format-panel></main>
<download-shelf></download-shelf>`;
  }
}
customElements.define('app-window', AppWindow);
</script>
</body>
</html>
